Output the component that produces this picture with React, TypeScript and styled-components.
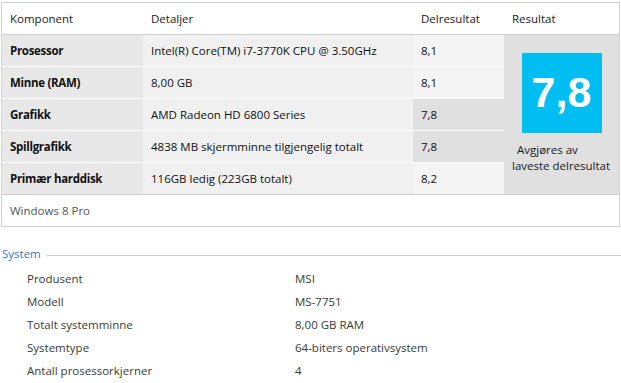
import React from "react";
import styled, { createGlobalStyle } from "styled-components";

const GlobalStyle = createGlobalStyle`
  html, body { margin: 0; padding: 0; background: #ffffff; }
  body { font-family: "Open Sans", "Lato", sans-serif; font-size: 11.5px; color: #1e1e1e; }
`;

const Page = styled.div`
  width: 621px;
  height: 383px;
  overflow: hidden;
  padding-top: 2px;
  box-sizing: border-box;
`;

const Table = styled.div`
  margin-left: 1px;
  width: 619px;
  box-sizing: border-box;
  border: 1px solid #d4d4d4;
  background: #ffffff;
`;

const COLS = "141px 270px 91px 115px";

const HeaderRow = styled.div`
  display: grid;
  grid-template-columns: ${COLS};
  height: 31px;
  border-bottom: 1px solid #cfcfcf;
  align-items: center;
`;

const HeaderCell = styled.div`
  padding-left: 8px;
  color: #1a1a1a;
`;

const Body = styled.div`
  display: grid;
  grid-template-columns: ${COLS};
  grid-template-rows: repeat(5, 31px);
  row-gap: 1px;
  background: #ffffff;
  border-bottom: 1px solid #cfcfcf;
`;

const Cell = styled.div<{ $bg: string; $bold?: boolean }>`
  display: flex;
  align-items: center;
  padding-left: 8px;
  background: ${(p) => p.$bg};
  font-weight: ${(p) => (p.$bold ? 700 : 400)};
  letter-spacing: ${(p) => (p.$bold ? "-0.3px" : "0")};
  color: #111111;
  white-space: nowrap;
`;

const ResultCell = styled.div`
  grid-column: 4;
  grid-row: 1 / span 5;
  background: #e0e0e0;
  display: flex;
  flex-direction: column;
  align-items: center;
  padding-top: 18px;
`;

const ScoreBox = styled.div`
  width: 80px;
  height: 80px;
  background: #00bdf2;
  color: #ffffff;
  font-family: "Liberation Sans", Arial, sans-serif;
  font-weight: 700;
  font-size: 43px;
  display: flex;
  align-items: center;
  justify-content: center;
  padding-bottom: 2px;
  box-sizing: border-box;
`;

const Caption = styled.div`
  align-self: stretch;
  margin-top: 9px;
  line-height: 16px;
  color: #1a1a1a;
`;

const CaptionLine = styled.div<{ $indent: number }>`
  padding-left: ${(p) => p.$indent}px;
  white-space: nowrap;
`;

const Footer = styled.div`
  height: 31px;
  display: flex;
  align-items: center;
  padding-left: 8px;
  color: #555555;
`;

const Section = styled.div`
  margin-top: 19px;
`;

const SectionHeader = styled.div`
  display: flex;
  align-items: center;
  height: 16px;
  padding-left: 2px;
`;

const SectionTitle = styled.div`
  color: #2f7ac6;
  line-height: 16px;
`;

const SectionRule = styled.div`
  flex: 1;
  height: 1px;
  background: #cccccc;
  margin-left: 6px;
  margin-top: 2px;
`;

const InfoList = styled.div`
  display: grid;
  grid-template-columns: 268px 1fr;
  grid-auto-rows: 23px;
  padding-left: 27px;
  margin-top: 5px;
  align-items: center;
  color: #3a3a3a;
`;

const InfoLabel = styled.div`
  white-space: nowrap;
`;

const InfoValue = styled.div`
  white-space: nowrap;
`;

type Row = { name: string; detail: string; score: string; low: boolean };

const rows: Row[] = [
  { name: "Prosessor", detail: "Intel(R) Core(TM) i7-3770K CPU @ 3.50GHz", score: "8,1", low: false },
  { name: "Minne (RAM)", detail: "8,00 GB", score: "8,1", low: false },
  { name: "Grafikk", detail: "AMD Radeon HD 6800 Series", score: "7,8", low: true },
  { name: "Spillgrafikk", detail: "4838 MB skjermminne tilgjengelig totalt", score: "7,8", low: true },
  { name: "Primær harddisk", detail: "116GB ledig (223GB totalt)", score: "8,2", low: false },
];

const info: [string, string][] = [
  ["Produsent", "MSI"],
  ["Modell", "MS-7751"],
  ["Totalt systemminne", "8,00 GB RAM"],
  ["Systemtype", "64-biters operativsystem"],
  ["Antall prosessorkjerner", "4"],
];

export default function App() {
  return (
    <>
      <GlobalStyle />
      <Page>
        <Table>
          <HeaderRow>
            <HeaderCell>Komponent</HeaderCell>
            <HeaderCell>Detaljer</HeaderCell>
            <HeaderCell>Delresultat</HeaderCell>
            <HeaderCell>Resultat</HeaderCell>
          </HeaderRow>
          <Body>
            {rows.map((r, i) => (
              <React.Fragment key={r.name}>
                <Cell $bg="#e8e8e8" $bold style={{ gridRow: i + 1, gridColumn: 1 }}>
                  {r.name}
                </Cell>
                <Cell $bg="#f0f0f0" style={{ gridRow: i + 1, gridColumn: 2 }}>
                  {r.detail}
                </Cell>
                <Cell $bg={r.low ? "#e0e0e0" : "#f4f4f4"} style={{ gridRow: i + 1, gridColumn: 3 }}>
                  {r.score}
                </Cell>
              </React.Fragment>
            ))}
            <ResultCell>
              <ScoreBox>7,8</ScoreBox>
              <Caption>
                <CaptionLine $indent={13}>Avgjøres av</CaptionLine>
                <CaptionLine $indent={8}>laveste delresultat</CaptionLine>
              </Caption>
            </ResultCell>
          </Body>
          <Footer>Windows 8 Pro</Footer>
        </Table>
        <Section>
          <SectionHeader>
            <SectionTitle>System</SectionTitle>
            <SectionRule />
          </SectionHeader>
          <InfoList>
            {info.map(([k, v]) => (
              <React.Fragment key={k}>
                <InfoLabel>{k}</InfoLabel>
                <InfoValue>{v}</InfoValue>
              </React.Fragment>
            ))}
          </InfoList>
        </Section>
      </Page>
    </>
  );
}
